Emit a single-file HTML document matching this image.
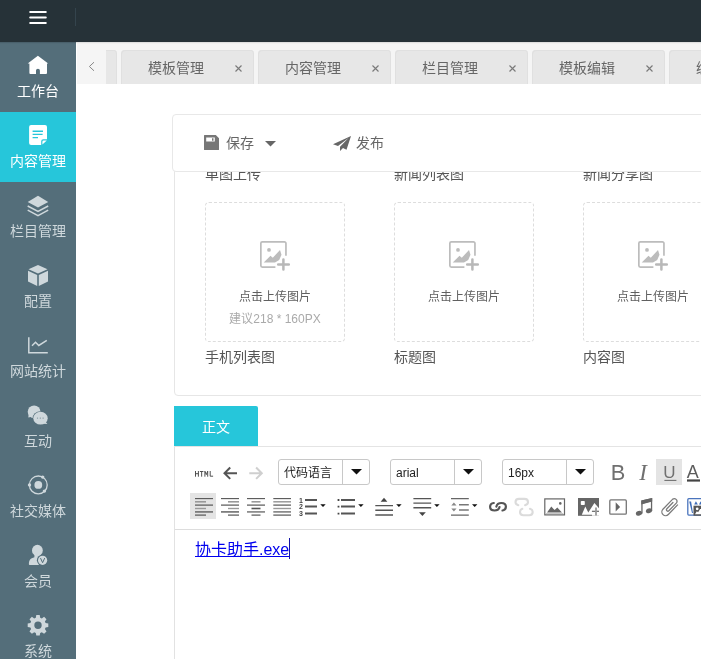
<!DOCTYPE html>
<html lang="zh-CN">
<head>
<meta charset="utf-8">
<title>内容管理</title>
<style>
*{box-sizing:border-box;margin:0;padding:0}
html,body{width:701px;height:659px;overflow:hidden;background:#fff}
body{will-change:transform;font-family:"Liberation Sans",sans-serif;font-size:14px;color:#666;position:relative}
.abs{position:absolute}
#header{position:absolute;left:0;top:0;width:701px;height:42px;background:#263238;z-index:30;box-shadow:0 1px 1px rgba(0,0,0,.12)}
#header .burger{position:absolute;left:29px;top:10px;width:18px;height:15px}
#header .burger i{position:absolute;left:.2px;width:17.600px;height:2px;border-radius:1px;background:#fff}
#header .vline{position:absolute;left:75px;top:8px;width:1px;height:18px;background:#34444d}
#side{position:absolute;left:0;top:42px;width:76px;height:617px;background:#546e7a;z-index:20;overflow:hidden}
.nav{position:absolute;left:0;width:76px;height:70px;color:#cfd8dc;text-align:center}
.nav.on{background:#26c6da;color:#fff}
.nav.hot{color:#fff}
.nav svg{position:absolute;left:26px;top:11px;width:24px;height:24px;fill:currentColor}
.nav span{font-weight:500;position:absolute;left:0;top:39px;width:76px;height:20px;line-height:20px;font-size:14px;white-space:nowrap}
#tabs{position:absolute;left:77px;top:43px;width:624px;height:41px;background:#f5f5f5;z-index:10;overflow:hidden}
#tabs .prev{position:absolute;left:0;top:0;width:29px;height:41px;background:#f5f5f5;z-index:2}
.tab{position:absolute;top:7px;height:34px;width:133px;background:#e7e7e7;box-shadow:inset 1px 1px 0 #e0e0e0,inset -1px 0 0 #e0e0e0;border-radius:4px 4px 0 0;color:#666;font-size:14px;line-height:36px;white-space:nowrap}
.tab b{font-weight:normal;position:absolute;left:27px;top:0}
.tab svg{position:absolute;left:113.600px;top:15px;width:7px;height:7px}
#bar{position:absolute;left:172px;top:114px;width:540px;height:58px;background:#fff;border:1px solid #e8e8e8;border-radius:4px;z-index:8}
#bar span{position:absolute;top:18px;height:20px;line-height:20px;font-size:14px;color:#666;white-space:nowrap}
#card{position:absolute;left:174px;top:150px;width:540px;height:246px;border:1px solid #e6e6e6;border-radius:0 0 0 4px;background:#fff}
.lbl{position:absolute;font-size:14px;line-height:20px;height:20px;color:#555;white-space:nowrap}
.up{position:absolute;top:202px;width:140px;height:140px;border:1px dashed #ddd;border-radius:4px}
.up svg{position:absolute;left:49px;top:32px;width:40px;height:40px}
.up p{position:absolute;left:0;width:138px;text-align:center;font-size:12px;line-height:16px;white-space:nowrap}
.up p.a{top:86px;color:#606060}
.up p.b{top:108px;color:#aaa}
#ztab{position:absolute;left:174px;top:406px;width:83.500px;height:40px;background:#26c6da;border-radius:0 2px 0 0;color:#fff;font-size:14px;line-height:42px;text-align:center}
#zline{position:absolute;left:174px;top:445.500px;width:540px;height:1.500px;background:#e4e4e4}
#edit{position:absolute;left:174px;top:447px;width:540px;height:231px;border-left:1px solid #e2e2e2}
#etb{position:absolute;left:0;top:0;width:540px;height:82.500px;border-bottom:1px solid #ddd;background:#fff}
.combo{position:absolute;top:459px;width:92px;height:26px;border:1px solid #c8c8c8;border-radius:3px;background:#fff;font-size:12px;color:#222;line-height:24px}
.combo b{font-weight:normal;position:absolute;left:5px;top:.7px;white-space:nowrap}
.combo i{position:absolute;left:63px;top:0;width:1px;height:24px;background:#c8c8c8}
.combo svg{position:absolute;left:71.600px;top:9.400px;width:11px;height:6px}
.hi{position:absolute;width:26px;height:26px;background:#e4e4e4}
#ico{position:absolute;left:0;top:0;width:701px;height:659px;z-index:5}
#doc{position:absolute;left:195px;top:538.800px;font-size:16px;line-height:22px;color:#00e;white-space:nowrap}
#doc a{color:#00e;text-decoration:underline}
#caret{position:absolute;left:289px;top:538px;width:1px;height:21px;background:#1414a8}
</style>
</head>
<body>

<div id="header">
  <svg class="abs" style="left:28px;top:9px" width="20" height="17" viewBox="0 0 20 17"><path d="M2.200 3H17.800M2.200 8.550H17.800M2.200 14.100H17.800" stroke="#fff" stroke-width="2" stroke-linecap="round"/></svg>
  <div class="vline"></div>
</div>

<div id="side">
  <div class="nav hot" style="top:0">
    <svg viewBox="0 0 24 24"><path d="M11.900 2.700 1.700 10.500H3.400V20a1 1 0 0 0 1 1H10V17.600a1.950 1.950 0 0 1 3.900 0V21H20a1 1 0 0 0 1-1V10.500H22.200z"/></svg>
    <span>工作台</span>
  </div>
  <div class="nav on" style="top:70px">
    <svg viewBox="0 0 24 24"><path fill-rule="evenodd" d="M5.100 2.100H19a2 2 0 0 1 2 2V16.300H17.200a2 2 0 0 0-2 2V21.900H5.100a2 2 0 0 1-2-2V4.100a2 2 0 0 1 2-2zM6.600 7.500v1.400H17V7.500zM6.600 10.700v1.400h10v-1.400zM6.600 13.900v1.400H12v-1.400z"/><path d="M16.400 21.600V18.700a1.200 1.200 0 0 1 1.200-1.200H20.800z"/></svg>
    <span>内容管理</span>
  </div>
  <div class="nav" style="top:140px">
    <svg viewBox="0 0 24 24" style="top:12.500px"><path d="M12 0.700 22.200 7 12 12.400 1.700 7z"/><path d="M1.700 11l10.300 5.500L22.200 11" fill="none" stroke="currentColor" stroke-width="1.500"/><path d="M1.700 15.200l10.300 5.500 10.200-5.500" fill="none" stroke="currentColor" stroke-width="1.500"/></svg>
    <span>栏目管理</span>
  </div>
  <div class="nav" style="top:210px">
    <svg viewBox="0 0 24 24" style="top:11.700px"><path d="M12 1 21.500 5.200 12 9.600 2.500 5.200zM2 6.700l9.200 4.300v11L2 17.400zM22 6.700l-9.200 4.300v11L22 17.400z"/></svg>
    <span>配置</span>
  </div>
  <div class="nav" style="top:280px">
    <svg viewBox="0 0 24 24"><path d="M2.800 4.200V19.700H21.800" fill="none" stroke="currentColor" stroke-width="1.500"/><path d="M6 12.700 9.500 9.200 12.800 12.500 20.800 7.400" fill="none" stroke="currentColor" stroke-width="1.500"/></svg>
    <span>网站统计</span>
  </div>
  <div class="nav" style="top:350px">
    <svg viewBox="0 0 24 24"><circle cx="8.100" cy="8.800" r="6.400"/><path d="M2.700 11 2.300 14.500 6 13.800z"/><ellipse cx="14.500" cy="15.200" rx="7.800" ry="7" fill="#546e7a"/><ellipse cx="14.500" cy="15.200" rx="7.200" ry="6.400"/><path d="M19.300 18.500 21.400 20.900 17.500 20.800z"/><g fill="#546e7a" opacity=".65"><circle cx="11.500" cy="15.100" r=".7"/><circle cx="14.300" cy="15.100" r=".7"/><circle cx="17.100" cy="15.100" r=".7"/></g></svg>
    <span>互动</span>
  </div>
  <div class="nav" style="top:420px">
    <svg viewBox="0 0 24 24"><circle cx="12.300" cy="11.900" r="8.900" fill="none" stroke="currentColor" stroke-width="1.300"/><circle cx="12.300" cy="11.900" r="3.900"/><circle cx="16.700" cy="4.100" r="1.700"/><circle cx="3.500" cy="11.900" r="1.700"/><circle cx="18.400" cy="18.100" r="1.700"/></svg>
    <span>社交媒体</span>
  </div>
  <div class="nav" style="top:490px">
    <svg viewBox="0 0 24 24"><ellipse cx="11.400" cy="7.400" rx="5.400" ry="5.600"/><path d="M8.400 11.500v2.700C4.400 15.300 2.900 16.900 2.900 21.200a.7.700 0 0 0 .7.700H15V11.500z"/><circle cx="16.600" cy="17.300" r="5.700" fill="#546e7a"/><circle cx="16.600" cy="17.300" r="4.600"/><path d="M14.500 15.100l2.100 4.600 2.100-4.600" fill="none" stroke="#546e7a" stroke-width="1"/></svg>
    <span>会员</span>
  </div>
  <div class="nav" style="top:560px">
    <svg viewBox="0 0 24 24"><path d="M10.300 2h3.400l.5 2.700 1.600.7 2.300-1.600 2.400 2.400-1.600 2.300.7 1.600 2.700.5v3.400l-2.700.5-.7 1.600 1.600 2.300-2.400 2.400-2.300-1.600-1.600.7-.5 2.700h-3.400l-.5-2.700-1.600-.7-2.300 1.600-2.400-2.400 1.600-2.300-.7-1.600L1.700 14v-3.400l2.700-.5.700-1.600-1.600-2.300 2.400-2.400 2.300 1.600 1.600-.7zM12 8.600a3.700 3.700 0 1 0 0 7.400 3.700 3.700 0 0 0 0-7.400z"/></svg>
    <span>系统</span>
  </div>
</div>

<div id="tabs">
  <div class="prev"><svg class="abs" style="left:11px;top:18px" width="7" height="11" viewBox="0 0 7 11"><path d="M6 1.200 1.400 5.500 6 9.800" fill="none" stroke="#888" stroke-width="1"/></svg></div>
  <div class="tab" style="left:-93px"></div>
  <div class="tab" style="left:44px"><b>模板管理</b><svg viewBox="0 0 7 7"><path d="M.5.500l6 6M6.500.500l-6 6" stroke="#7a7a7a" stroke-width="1.150" fill="none"/></svg></div>
  <div class="tab" style="left:181px"><b>内容管理</b><svg viewBox="0 0 7 7"><path d="M.5.500l6 6M6.500.500l-6 6" stroke="#7a7a7a" stroke-width="1.150" fill="none"/></svg></div>
  <div class="tab" style="left:318px"><b>栏目管理</b><svg viewBox="0 0 7 7"><path d="M.5.500l6 6M6.500.500l-6 6" stroke="#7a7a7a" stroke-width="1.150" fill="none"/></svg></div>
  <div class="tab" style="left:455px"><b>模板编辑</b><svg viewBox="0 0 7 7"><path d="M.5.500l6 6M6.500.500l-6 6" stroke="#7a7a7a" stroke-width="1.150" fill="none"/></svg></div>
  <div class="tab" style="left:592px"><b>编辑内容</b></div>
</div>

<div id="card"></div>
<div class="lbl" style="left:205px;top:164px">单图上传</div>
<div class="lbl" style="left:394px;top:164px">新闻列表图</div>
<div class="lbl" style="left:583px;top:164px">新闻分享图</div>

<div class="up" style="left:205px">
  <svg viewBox="0 0 40 40"><path d="M20.400 32.050H7.350a1.500 1.500 0 0 1-1.500-1.500V8.350a1.500 1.500 0 0 1 1.500-1.500H29.450a1.500 1.500 0 0 1 1.500 1.500V20.800" fill="none" stroke="#bcbcbc" stroke-width="1.700"/><circle cx="14" cy="14.900" r="1.900" fill="#bcbcbc"/><path d="M8.700 27.500 15.500 20.800 17.800 22.700 25 15.100 26.500 19.700 24.200 25 20 27.500z" fill="#bcbcbc"/><path d="M28.400 24.500v10.100M23.200 29.500h10.600" stroke="#b8b8b8" stroke-width="2.500" stroke-linecap="round" fill="none"/></svg>
  <p class="a">点击上传图片</p><p class="b">建议218 * 160PX</p>
</div>
<div class="up" style="left:394px">
  <svg viewBox="0 0 40 40"><path d="M20.400 32.050H7.350a1.500 1.500 0 0 1-1.500-1.500V8.350a1.500 1.500 0 0 1 1.500-1.500H29.450a1.500 1.500 0 0 1 1.500 1.500V20.800" fill="none" stroke="#bcbcbc" stroke-width="1.700"/><circle cx="14" cy="14.900" r="1.900" fill="#bcbcbc"/><path d="M8.700 27.500 15.500 20.800 17.800 22.700 25 15.100 26.500 19.700 24.200 25 20 27.500z" fill="#bcbcbc"/><path d="M28.400 24.500v10.100M23.200 29.500h10.600" stroke="#b8b8b8" stroke-width="2.500" stroke-linecap="round" fill="none"/></svg>
  <p class="a">点击上传图片</p>
</div>
<div class="up" style="left:583px">
  <svg viewBox="0 0 40 40"><path d="M20.400 32.050H7.350a1.500 1.500 0 0 1-1.500-1.500V8.350a1.500 1.500 0 0 1 1.500-1.500H29.450a1.500 1.500 0 0 1 1.500 1.500V20.800" fill="none" stroke="#bcbcbc" stroke-width="1.700"/><circle cx="14" cy="14.900" r="1.900" fill="#bcbcbc"/><path d="M8.700 27.500 15.500 20.800 17.800 22.700 25 15.100 26.500 19.700 24.200 25 20 27.500z" fill="#bcbcbc"/><path d="M28.400 24.500v10.100M23.200 29.500h10.600" stroke="#b8b8b8" stroke-width="2.500" stroke-linecap="round" fill="none"/></svg>
  <p class="a">点击上传图片</p>
</div>
<div class="lbl" style="left:205px;top:347px">手机列表图</div>
<div class="lbl" style="left:394px;top:347px">标题图</div>
<div class="lbl" style="left:583px;top:347px">内容图</div>

<div id="bar">
  <svg class="abs" style="left:31px;top:19.800px" width="15" height="15" viewBox="0 0 15 15"><path d="M.6 0h11.200L15 3.200V14.400a.6.600 0 0 1-.6.600H.6A.6.600 0 0 1 0 14.400V.6A.6.600 0 0 1 .6 0zM2.200 2.600v3.800h8.600V2.600zM8 3.300h1.500v2.400H8z" fill="#777" fill-rule="evenodd"/></svg>
  <span style="left:52.800px">保存</span>
  <svg class="abs" style="left:91.500px;top:25.500px" width="11" height="6" viewBox="0 0 11 6"><path d="M0 0h11L5.500 5.600z" fill="#666"/></svg>
  <svg class="abs" style="left:159.500px;top:21.300px" width="18" height="15" viewBox="0 0 18 15"><path d="M18 0 0 8.200l5 1.800L15.500 2 7 10.700v4.300l3-3 3.500 1.800z" fill="#666"/></svg>
  <span style="left:183px">发布</span>
</div>

<div id="ztab">正文</div>
<div id="zline"></div>
<div id="edit"><div id="etb"></div></div>

<div class="combo" style="left:278px"><b>代码语言</b><i></i><svg viewBox="0 0 11 6"><path d="M0 0h11L5.500 5.400z" fill="#111"/></svg></div>
<div class="combo" style="left:390px"><b>arial</b><i></i><svg viewBox="0 0 11 6"><path d="M0 0h11L5.500 5.400z" fill="#111"/></svg></div>
<div class="combo" style="left:502px"><b>16px</b><i></i><svg viewBox="0 0 11 6"><path d="M0 0h11L5.500 5.400z" fill="#111"/></svg></div>

<div class="hi" style="left:656px;top:459px"></div>
<div class="hi" style="left:190px;top:493px"></div>

<svg id="ico" viewBox="0 0 701 659">
<path d="M195.500 471V476.700M198.400 471V476.700M195.500 473.700H198.400M199.900 471.500H203.400M201.650 471.500V476.700M204.900 476.700V471.200L206.300 474.600 207.700 471.200V476.700M210.200 471V476.200H213.100" fill="none" stroke="#484848" stroke-width=".95"/>
<path d="M237 473.200H224.800M230.200 467.500l-5.700 5.700 5.700 5.700" fill="none" stroke="#555" stroke-width="2"/>
<path d="M249.300 473.200H261.500M256.100 467.500l5.700 5.700-5.700 5.700" fill="none" stroke="#cfcfcf" stroke-width="2"/>
<text x="610.800" y="480.100" font-family="Liberation Sans, sans-serif" font-size="21.800" fill="#707070">B</text>
<text x="639.300" y="480.100" font-family="Liberation Serif, serif" font-style="italic" font-size="23" fill="#707070">I</text>
<text x="663.300" y="477.500" font-family="Liberation Sans, sans-serif" font-size="17" fill="#707070">U</text>
<path d="M664.400 480.400H676.400" stroke="#707070" stroke-width="1.100"/>
<text x="686.800" y="477.600" font-family="Liberation Sans, sans-serif" font-size="18" fill="#5c5c5c">A</text>
<path d="M687 480.500H700" stroke="#444" stroke-width="2.200"/>
<path d="M195 498.6H213" stroke="#555" stroke-width="1.1"/><path d="M195 501.8H206" stroke="#999" stroke-width="1.6"/><path d="M195 505.1H213" stroke="#555" stroke-width="1.2"/><path d="M195 508.5H206" stroke="#999" stroke-width="1.4"/><path d="M195 511.9H213" stroke="#777" stroke-width="1.7"/><path d="M195 515.1H206" stroke="#555" stroke-width="1.2"/>
<path d="M221 498.6H239" stroke="#555" stroke-width="1.1"/><path d="M228 501.8H239" stroke="#999" stroke-width="1.6"/><path d="M221 505.1H239" stroke="#555" stroke-width="1.2"/><path d="M228 508.5H239" stroke="#999" stroke-width="1.4"/><path d="M221 511.9H239" stroke="#777" stroke-width="1.7"/><path d="M228 515.1H239" stroke="#555" stroke-width="1.2"/>
<path d="M247 498.6H265" stroke="#555" stroke-width="1.1"/><path d="M251.5 501.8H260.5" stroke="#999" stroke-width="1.6"/><path d="M247 505.1H265" stroke="#555" stroke-width="1.2"/><path d="M251.5 508.5H260.5" stroke="#555" stroke-width="1.6"/><path d="M247 511.9H265" stroke="#888" stroke-width="1.7"/><path d="M251.5 515.1H260.5" stroke="#555" stroke-width="1.2"/>
<path d="M273.3 498.6H291" stroke="#555" stroke-width="1.1"/><path d="M273.3 501.8H291" stroke="#999" stroke-width="1.5"/><path d="M273.3 505.1H291" stroke="#555" stroke-width="1.2"/><path d="M273.3 508.5H291" stroke="#999" stroke-width="1.4"/><path d="M273.3 511.9H291" stroke="#777" stroke-width="1.5"/><path d="M273.3 515.1H291" stroke="#555" stroke-width="1.2"/>
<path d="M305 500H317M305 506.600H317M305 513.600H317" stroke="#555" stroke-width="2"/>
<g font-family="Liberation Sans, sans-serif" font-size="7" font-weight="bold" fill="#444"><text x="298.900" y="502.500">1</text><text x="298.900" y="509.100">2</text><text x="298.900" y="516.100">3</text></g>
<path d="M320.3 504.300h5.400l-2.700 2.700z" fill="#111"/>
<path d="M341 500H355M341 506.600H355M341 513.600H355" stroke="#555" stroke-width="2"/>
<path d="M337.600 500h1.800M337.600 506.600h1.800M337.600 513.600h1.800" stroke="#444" stroke-width="1.800"/>
<path d="M358.2 504.300h5.400l-2.700 2.700z" fill="#111"/>
<path d="M380.600 501.800h6.800l-3.400-4z" fill="#444"/><path d="M375.300 505.600H393M375.300 510.300H393M375.300 515H393" stroke="#555" stroke-width="1.400"/>
<path d="M396.2 504.300h5.400l-2.700 2.700z" fill="#111"/>
<path d="M419 512.300h6.800l-3.400 3.800z" fill="#444"/><path d="M413.400 498.600H431.200M413.400 503.100H431.200M413.400 507.700H431.200" stroke="#555" stroke-width="1.400"/>
<path d="M434.2 504.300h5.400l-2.700 2.700z" fill="#111"/>
<path d="M451 498.600H468.800M451 515.100H468.800" stroke="#666" stroke-width="1.200"/><path d="M459 504.700H468.800M459 510H468.800" stroke="#777" stroke-width="1.400"/><path d="M451.300 505.400h5.200l-2.600-3zM451.300 508.600h5.200l-2.600 3z" fill="#888"/>
<path d="M472 504.300h5.400l-2.700 2.700z" fill="#111"/>
<path d="M493.800 503C491.200 503.300 490.100 505 490.100 506.800 490.100 509.200 492 510.500 494.600 510.500 497.300 510.500 499 509.200 499.500 507M496.400 506.600C496.900 504.300 498.700 503 501.400 503 504 503 505.900 504.500 505.900 506.800 505.900 508.700 504.800 510.100 502.500 510.500" fill="none" stroke="#555" stroke-width="2.200" stroke-linecap="round"/>
<path d="M518.300 505.200C516.300 504.600 515.500 503.600 515.500 502.300 515.500 500.200 517 498.900 519 498.900H524.500C526.500 498.900 528 500.200 528 502.300 528 503.600 527.100 504.600 525.100 505.200M522.300 508.800C520.600 509.400 520 510.600 520 512 520 514 521.400 515.200 523.400 515.200H529.300C531.300 515.200 532.700 514 532.700 512 532.700 510.600 532 509.400 530 508.800" fill="none" stroke="#dbdbdb" stroke-width="2.100" stroke-linecap="round"/>
<rect x="544.800" y="498.900" width="19.700" height="16" fill="#fff" stroke="#666" stroke-width="1.200"/><path d="M547 512.500l4.300-6 3.300 3.600 2.700-2.600 4.700 5z" fill="#666"/><circle cx="560.300" cy="503.400" r="1.300" fill="#666"/><path d="M546 513.600H563.300" stroke="#999" stroke-width=".6"/>
<rect x="578" y="498" width="21" height="17.800" fill="#666"/><path d="M581.800 514.700 585.300 506.600 588.300 512.500 594.400 503 599 508.300V515.800H592V514.700z" fill="#fff"/><rect x="580.800" y="501" width="4" height="4" rx=".8" fill="#fff"/><path d="M591.900 511.300H599" stroke="#666" stroke-width="1.200"/><path d="M596 507.400V515.600" stroke="#999" stroke-width="1.800"/>
<rect x="609.800" y="499.900" width="16.500" height="14.300" rx="1" fill="#fff" stroke="#757575" stroke-width="1.300"/><path d="M615.700 502.300v9.200l4.400-4.600z" fill="#666"/>
<g fill="#666"><ellipse cx="639" cy="513.200" rx="3.200" ry="2.300" transform="rotate(-18 639 513.200)"/><ellipse cx="649" cy="510.800" rx="3.200" ry="2.300" transform="rotate(-18 649 510.800)"/><path d="M641.300 500.600 652.200 497.900V511H650.900V501.600L642.600 503.700V513.400H641.300z"/><path d="M641.300 500.600 652.200 497.900V501.400L641.300 504.400z"/></g>
<g transform="translate(662.800 514.300) rotate(-46)"><path d="M17 4.100H3.700A3.700 3.700 0 0 1 3.700 -3.400H17.800A2.700 2.700 0 0 1 17.800 1.900H6.800A1.300 1.300 0 0 1 6.800 -.9H15.500" fill="none" stroke="#7a7a7a" stroke-width="1.250" stroke-linecap="round"/></g>
<rect x="687.800" y="498.700" width="20" height="16.400" rx="1" fill="#fff" stroke="#4a74bd" stroke-width="1.300"/><path d="M689.200 501.600h1.900l1.900 11.400h-1zM695.900 501.300l-1.700 3.200h3.700zM700.600 501.300l-1.600 3.200h3z" fill="#3f6db8"/><rect x="693.500" y="505.700" width="10" height="10" fill="#555"/><circle cx="697.200" cy="508.800" r="1.400" fill="#fff"/><path d="M695 514.300l1.800-3 1.300 1 2-3.300h1.500v5.300z" fill="#fff"/>
</svg>

<div id="doc"><a>协卡助手.exe</a></div>
<div id="caret"></div>

</body>
</html>
